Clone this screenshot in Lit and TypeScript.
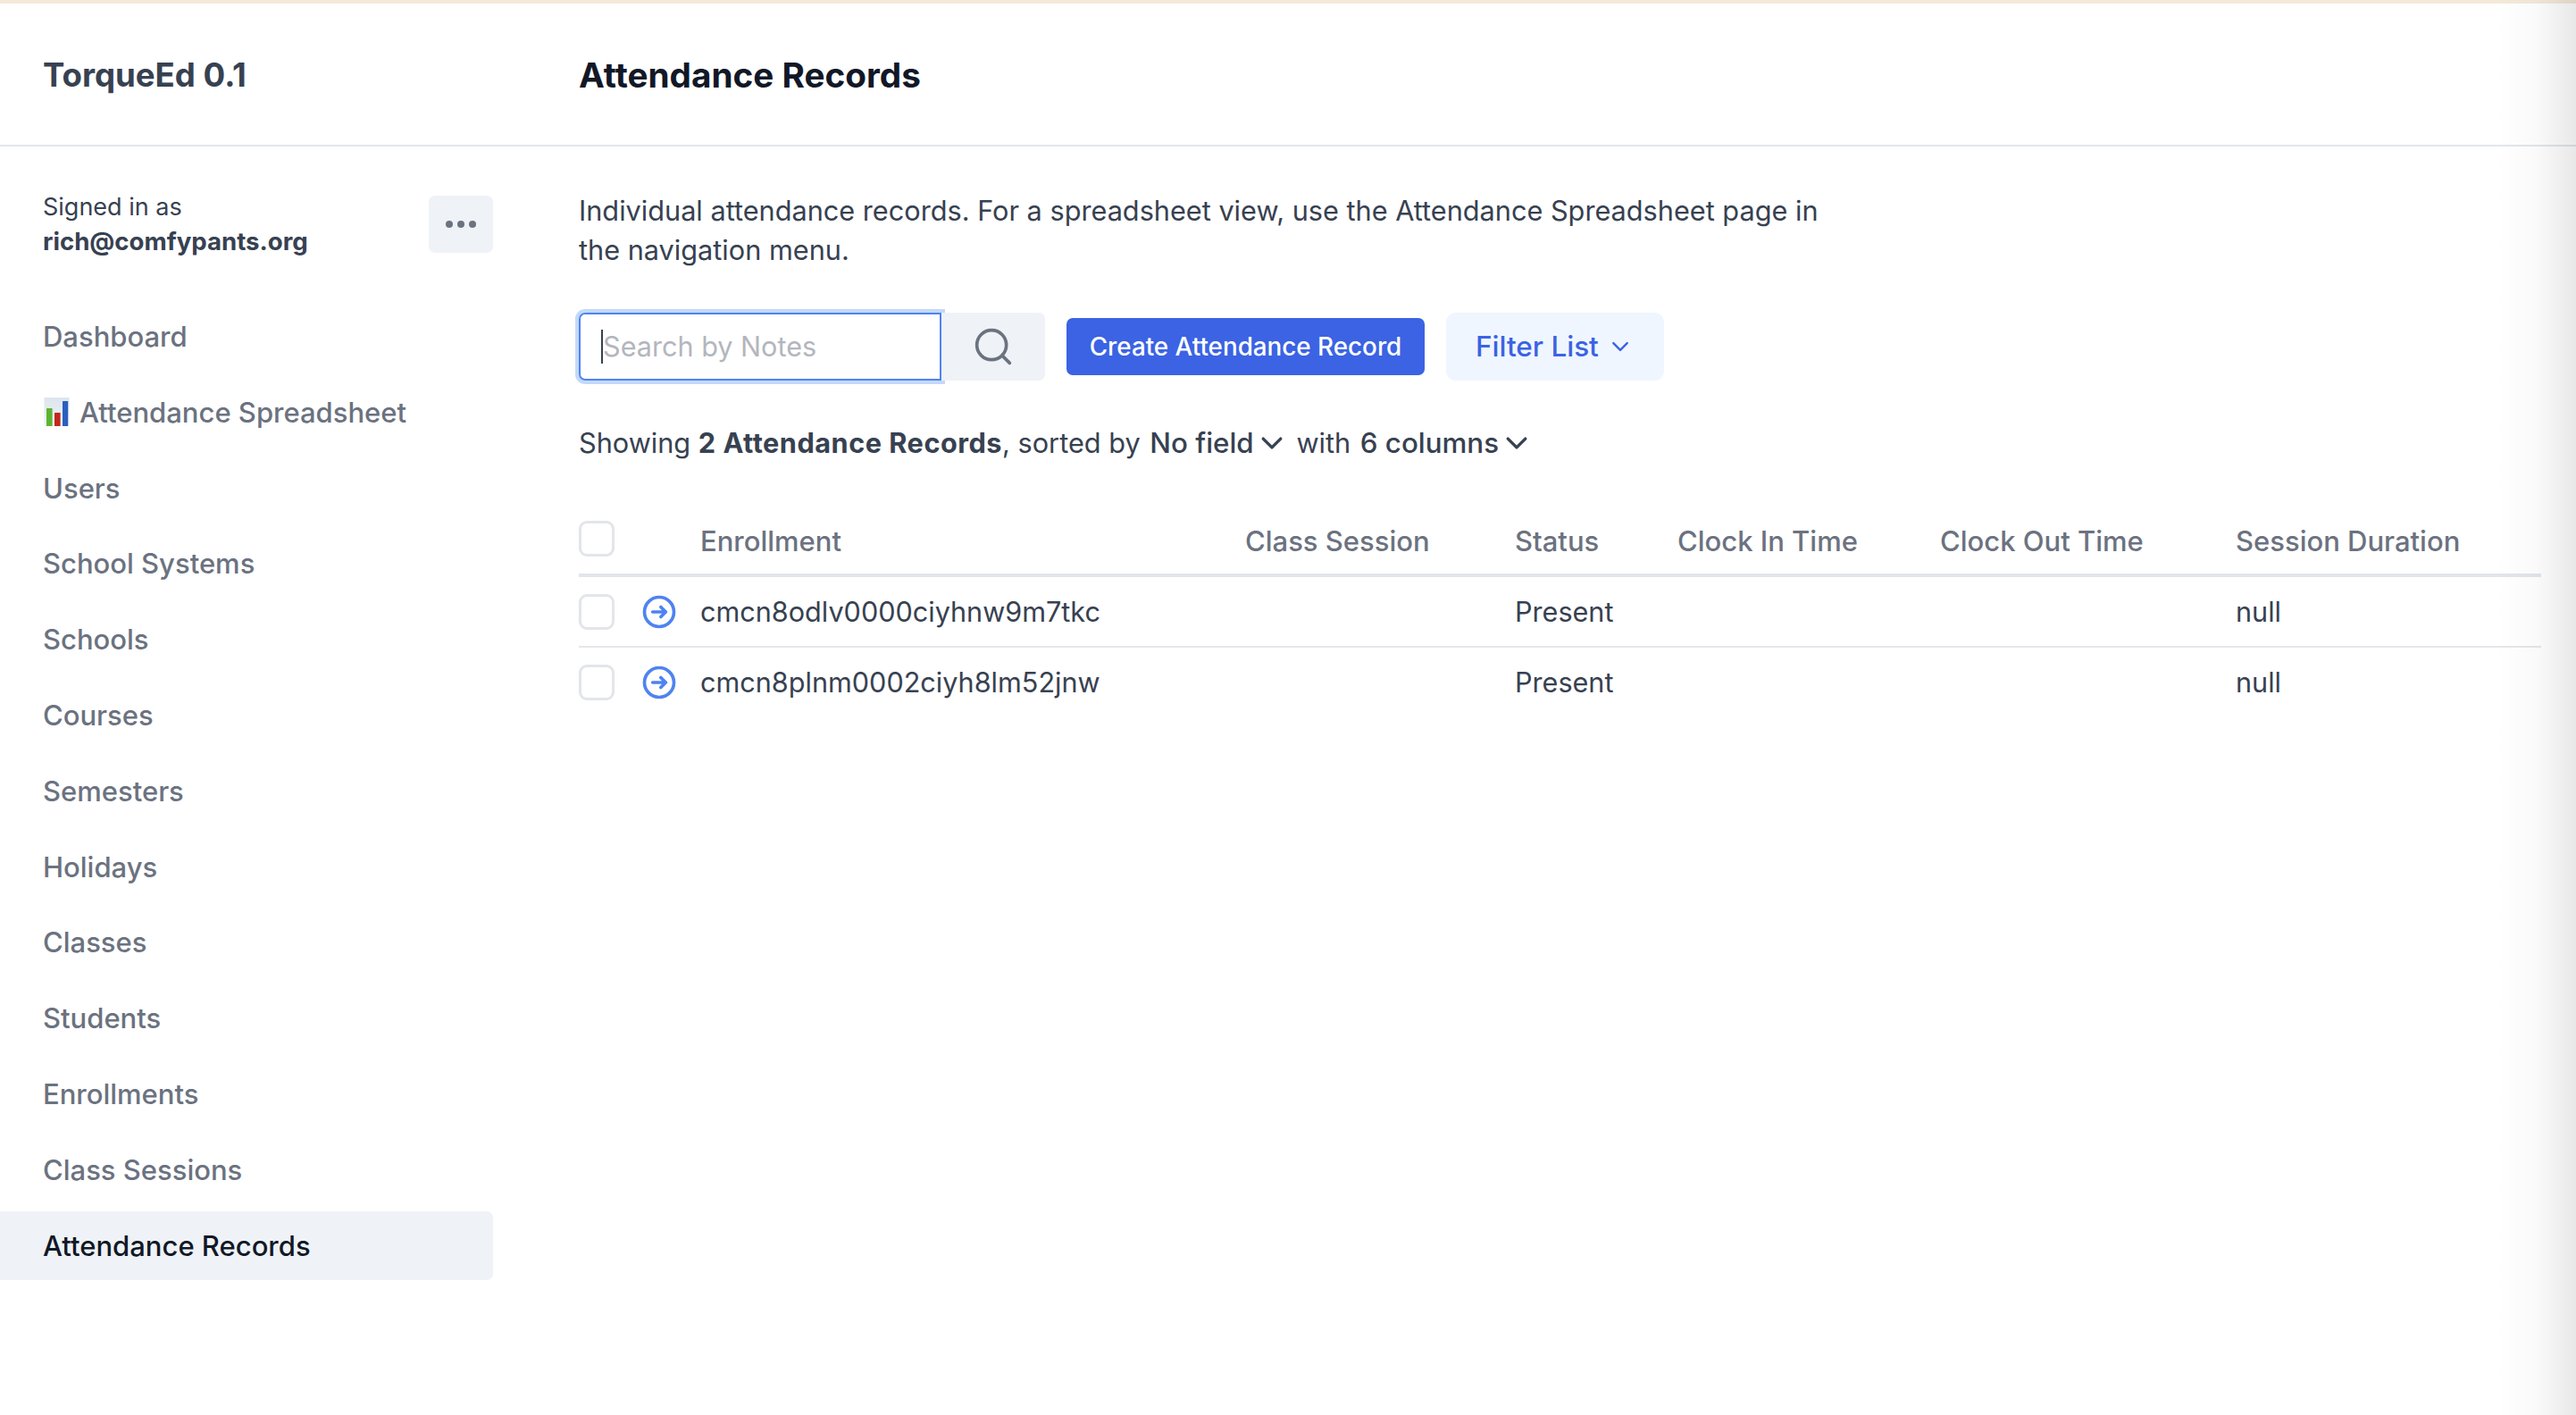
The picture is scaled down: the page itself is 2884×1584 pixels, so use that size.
import { LitElement, css, html } from "lit";
import { customElement } from "lit/decorators.js";

const NAV = [
  "Dashboard",
  "Attendance Spreadsheet",
  "Users",
  "School Systems",
  "Schools",
  "Courses",
  "Semesters",
  "Holidays",
  "Classes",
  "Students",
  "Enrollments",
  "Class Sessions",
  "Attendance Records",
];

const COLUMNS = ["Enrollment", "Class Session", "Status", "Clock In Time", "Clock Out Time", "Session Duration"];

const ROWS = [
  { enrollment: "cmcn8odlv0000ciyhnw9m7tkc", status: "Present", duration: "null" },
  { enrollment: "cmcn8plnm0002ciyh8lm52jnw", status: "Present", duration: "null" },
];

const chevron = (cls: string) => html`<svg class=${cls} viewBox="0 0 20 20" fill="none" stroke="currentColor" stroke-linecap="round" stroke-linejoin="round"><path d="M3 6.5l7 7 7-7" /></svg>`;

const chartEmoji = html`<svg class="emoji" viewBox="0 0 30 32">
  <defs>
    <linearGradient id="paper" x1="0" y1="0" x2="0" y2="1">
      <stop offset="0" stop-color="#dce5ee" />
      <stop offset="1" stop-color="#eef2f6" />
    </linearGradient>
  </defs>
  <rect x="1.5" y="0" width="28" height="32" fill="url(#paper)" />
  <rect x="4" y="12" width="6.6" height="20" rx="0.6" fill="#5cb531" />
  <rect x="13" y="17" width="6.6" height="15" rx="0.6" fill="#c1281c" />
  <rect x="22" y="4" width="6.2" height="28" rx="0.6" fill="#2a5fc0" />
</svg>`;

@customElement("app-root")
export class AppRoot extends LitElement {
  static styles = css`
    :host {
      display: block;
      position: relative;
      min-height: 100vh;
      overflow: hidden;
      background: #fff;
      color: #374151;
      font-family: Inter, "Liberation Sans", sans-serif;
      font-size: 31px;
      line-height: 44px;
    }

    .strip {
      height: 4px;
      background: #f4e9d9;
    }

    .edge {
      position: absolute;
      top: 0;
      right: 0;
      bottom: 0;
      width: 90px;
      background: linear-gradient(to right, rgba(0, 0, 0, 0), rgba(0, 0, 0, 0.02) 50%, rgba(0, 0, 0, 0.09));
      pointer-events: none;
    }

    header {
      display: grid;
      grid-template-columns: 600px 1fr;
      align-items: center;
      height: 156px;
      padding-top: 2px;
      border-bottom: 2px solid #e2e6ea;
    }

    .brand {
      padding-left: 48px;
      font-size: 36.6px;
      font-weight: 700;
    }

    h1 {
      margin: 0;
      padding-left: 48px;
      color: #111827;
      font-size: 38.7px;
      font-weight: 700;
    }

    .layout {
      display: grid;
      grid-template-columns: 600px 1fr;
    }

    aside {
      padding: 48px 48px 0 0;
    }

    .user {
      display: flex;
      justify-content: space-between;
      align-items: center;
      padding-left: 48px;
      font-size: 27px;
      line-height: 39px;
    }

    .user b {
      display: block;
      font-size: 27.6px;
      font-weight: 700;
    }

    .more {
      display: flex;
      justify-content: center;
      align-items: center;
      gap: 5px;
      width: 72px;
      height: 64px;
      border-radius: 7px;
      background: #eff2f6;
    }

    .more i {
      width: 8px;
      height: 8px;
      border-radius: 50%;
      background: #6b7280;
    }

    nav {
      display: flex;
      flex-direction: column;
      gap: 7.8px;
      margin-top: 48.5px;
    }

    nav a {
      display: flex;
      align-items: center;
      gap: 11px;
      height: 77px;
      padding-left: 48px;
      border-radius: 0 7px 7px 0;
      color: #6b7280;
      font-weight: 500;
    }

    nav a.active {
      background: #eff2f6;
      color: #111827;
    }

    .emoji {
      width: 30px;
      height: 32px;
      margin-top: -2px;
    }

    main {
      padding: 50px 39px 0 48px;
    }

    .intro {
      margin: 0;
      max-width: 1413px;
      font-size: 30.68px;
    }

    .toolbar {
      display: flex;
      align-items: center;
      margin-top: 48px;
    }

    .search {
      display: flex;
      align-items: center;
      box-sizing: border-box;
      width: 406px;
      height: 76px;
      padding-left: 23px;
      border: 2px solid #4f83f1;
      border-radius: 7px 0 0 7px;
      box-shadow: 0 0 0 4px #c3d9fb;
      color: #b3b6bd;
      font-size: 30.6px;
    }

    .caret {
      width: 2px;
      height: 38px;
      background: #374151;
    }

    .search-btn {
      display: flex;
      justify-content: center;
      align-items: center;
      width: 116px;
      height: 76px;
      border-radius: 0 7px 7px 0;
      background: #eff2f6;
      color: #6b7280;
    }

    .search-btn svg {
      width: 44px;
      height: 44px;
    }

    .create {
      display: flex;
      justify-content: center;
      align-items: center;
      width: 401px;
      height: 64px;
      margin-left: 24px;
      border-radius: 7px;
      background: #3b63e3;
      color: #fff;
      font-size: 27.8px;
      font-weight: 500;
    }

    .filter {
      display: flex;
      align-items: center;
      box-sizing: border-box;
      width: 244px;
      height: 76px;
      margin-left: 24px;
      padding-left: 33px;
      border-radius: 11px;
      background: #eff6ff;
      color: #3b63e3;
      font-size: 31.5px;
      font-weight: 500;
    }

    .chev-sm {
      width: 22px;
      height: 22px;
      margin-left: 13px;
      stroke-width: 2.2;
    }

    .summary {
      display: flex;
      align-items: center;
      margin-top: 48px;
      font-size: 30.7px;
      white-space: pre;
    }

    .summary b {
      font-weight: 700;
      letter-spacing: 0.5px;
    }

    .summary span.pick {
      margin-left: 2px;
      font-size: 31.3px;
      font-weight: 500;
    }

    .summary span.with {
      margin-left: -3.5px;
    }

    .chev {
      width: 28px;
      height: 28px;
      margin-left: 6px;
      stroke-width: 2.4;
    }

    table {
      width: 2197px;
      margin-top: 46px;
      border-collapse: collapse;
      table-layout: fixed;
    }

    th {
      height: 78px;
      padding: 0;
      border-bottom: 4px solid #e2e5ea;
      color: #6b7280;
      font-weight: 500;
      text-align: left;
    }

    th.label {
      height: 73px;
      padding-top: 5px;
    }

    td {
      height: 77px;
      padding: 0;
      border-bottom: 2px solid #e5e7eb;
      font-size: 30.6px;
    }

    tr:last-child td {
      border-bottom: 0;
    }

    .box {
      display: block;
      box-sizing: border-box;
      width: 40px;
      height: 40px;
      border: 3px solid #e2e5ea;
      border-radius: 9px;
    }

    .go {
      display: block;
      width: 44px;
      height: 44px;
      margin-left: -3px;
      color: #4f83f1;
    }
  `;

  render() {
    return html`
      <div class="strip"></div>
      <header>
        <div class="brand">TorqueEd 0.1</div>
        <h1>Attendance Records</h1>
      </header>
      <div class="layout">
        <aside>
          <div class="user">
            <div>Signed in as<b>rich@comfypants.org</b></div>
            <div class="more"><i></i><i></i><i></i></div>
          </div>
          <nav>
            ${NAV.map(
              (item) => html`<a class=${item === "Attendance Records" ? "active" : ""}>
                ${item === "Attendance Spreadsheet" ? chartEmoji : ""}<span>${item}</span>
              </a>`
            )}
          </nav>
        </aside>
        <main>
          <p class="intro">
            Individual attendance records. For a spreadsheet view, use the Attendance Spreadsheet page in the navigation menu.
          </p>
          <div class="toolbar">
            <div class="search"><span class="caret"></span><span>Search by Notes</span></div>
            <div class="search-btn">
              <svg viewBox="0 0 24 24" fill="none" stroke="currentColor" stroke-width="2" stroke-linecap="round">
                <circle cx="11" cy="11" r="9" />
                <path d="M17.5 17.5L22 22" />
              </svg>
            </div>
            <div class="create">Create Attendance Record</div>
            <div class="filter">Filter List${chevron("chev-sm")}</div>
          </div>
          <div class="summary">
            <span>Showing </span><b>2 Attendance Records</b><span>, sorted by </span>
            <span class="pick">No field</span>${chevron("chev")}
            <span class="with">  with </span><span class="pick">6 columns</span>${chevron("chev")}
          </div>
          <table>
            <colgroup>
              <col style="width:71px" />
              <col style="width:65px" />
              <col style="width:610px" />
              <col style="width:302px" />
              <col style="width:182px" />
              <col style="width:294px" />
              <col style="width:331px" />
              <col />
            </colgroup>
            <thead>
              <tr>
                <th><span class="box"></span></th>
                <th></th>
                ${COLUMNS.map((c) => html`<th class="label">${c}</th>`)}
              </tr>
            </thead>
            <tbody>
              ${ROWS.map(
                (r) => html`<tr>
                  <td><span class="box"></span></td>
                  <td>
                    <svg class="go" viewBox="0 0 24 24" fill="none" stroke="currentColor" stroke-width="2" stroke-linecap="round" stroke-linejoin="round">
                      <circle cx="12" cy="12" r="9" />
                      <path d="M13 9l3 3m0 0l-3 3m3-3H8" />
                    </svg>
                  </td>
                  <td>${r.enrollment}</td>
                  <td></td>
                  <td>${r.status}</td>
                  <td></td>
                  <td></td>
                  <td>${r.duration}</td>
                </tr>`
              )}
            </tbody>
          </table>
        </main>
      </div>
      <div class="edge"></div>
    `;
  }
}
